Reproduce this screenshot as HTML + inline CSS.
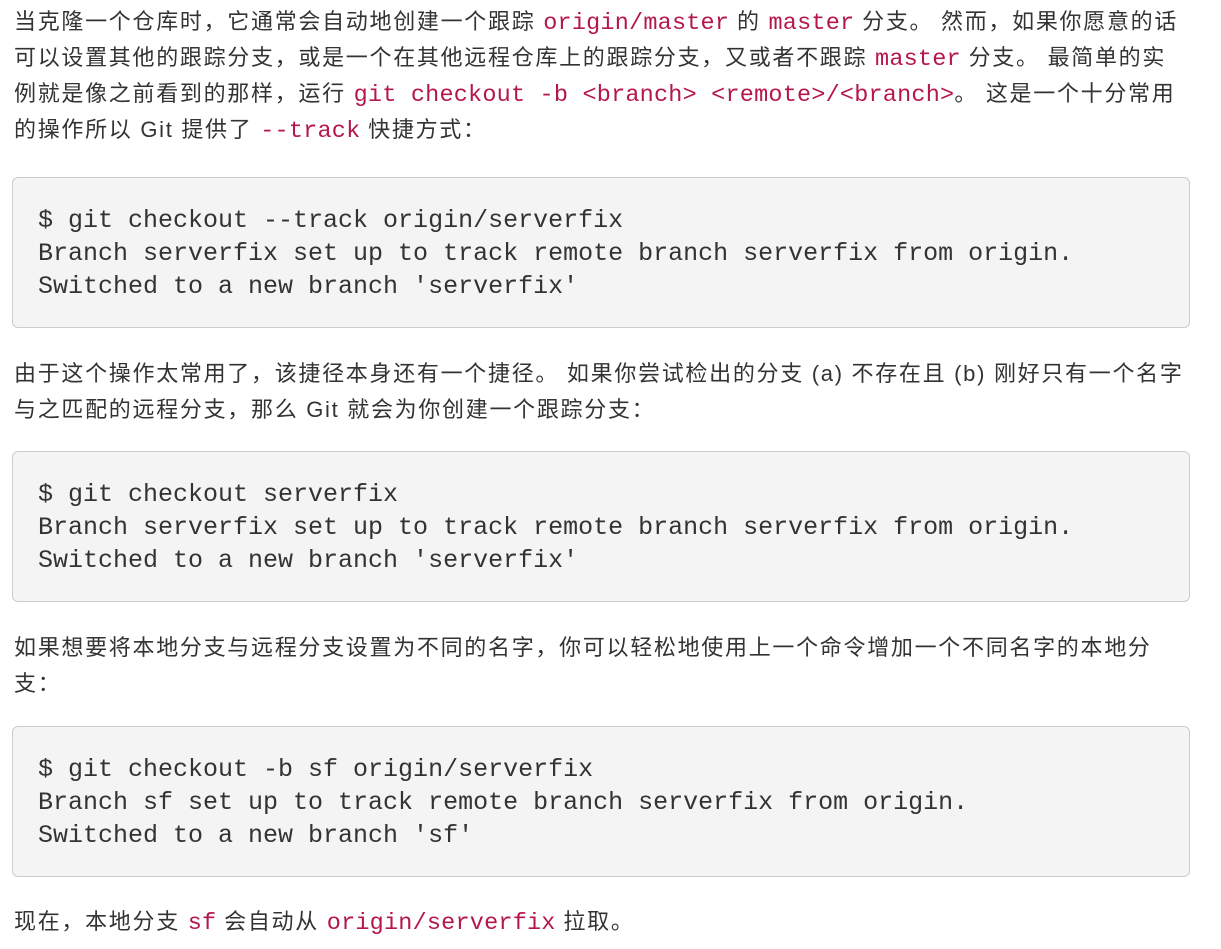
<!DOCTYPE html>
<html><head><meta charset="utf-8"><style>
body{margin:0;width:1221px;height:949px;background:#fff;position:relative;overflow:hidden;font-family:"Liberation Sans","Noto Sans CJK SC",sans-serif;color:#333;}
.l{position:absolute;left:14px;font-size:22px;letter-spacing:1.7px;line-height:36px;height:36px;white-space:nowrap;}
code{font-family:"Liberation Mono",monospace;color:#b5174b;font-size:23.5px;letter-spacing:0.2px;}
.pre{position:absolute;left:12px;width:1178px;height:151px;background:#f4f4f4;border:1px solid #ccc;border-radius:6px;box-sizing:border-box;}
.pre div{position:absolute;left:25px;font-family:"Liberation Mono",monospace;font-size:25px;line-height:33px;color:#333;white-space:pre;}
</style></head><body>
<div class="l" style="top:4px">当克隆一个仓库时，它通常会自动地创建一个跟踪 <code>origin/master</code> 的 <code>master</code> 分支。 然而，如果你愿意的话</div>
<div class="l" style="top:40px">可以设置其他的跟踪分支，或是一个在其他远程仓库上的跟踪分支，又或者不跟踪 <code>master</code> 分支。 最简单的实</div>
<div class="l" style="top:76px">例就是像之前看到的那样，运行 <code>git checkout -b &lt;branch&gt; &lt;remote&gt;/&lt;branch&gt;</code>。 这是一个十分常用</div>
<div class="l" style="top:112px">的操作所以 Git 提供了 <code>--track</code> 快捷方式：</div>
<div class="pre" style="top:177px"><div style="top:26px">$ git checkout --track origin/serverfix
Branch serverfix set up to track remote branch serverfix from origin.
Switched to a new branch 'serverfix'</div></div>
<div class="l" style="top:356px">由于这个操作太常用了，该捷径本身还有一个捷径。 如果你尝试检出的分支 (a) 不存在且 (b) 刚好只有一个名字</div>
<div class="l" style="top:392px">与之匹配的远程分支，那么 Git 就会为你创建一个跟踪分支：</div>
<div class="pre" style="top:451px"><div style="top:26px">$ git checkout serverfix
Branch serverfix set up to track remote branch serverfix from origin.
Switched to a new branch 'serverfix'</div></div>
<div class="l" style="top:630px">如果想要将本地分支与远程分支设置为不同的名字，你可以轻松地使用上一个命令增加一个不同名字的本地分</div>
<div class="l" style="top:666px">支：</div>
<div class="pre" style="top:726px"><div style="top:26px">$ git checkout -b sf origin/serverfix
Branch sf set up to track remote branch serverfix from origin.
Switched to a new branch 'sf'</div></div>
<div class="l" style="top:904px">现在，本地分支 <code>sf</code> 会自动从 <code>origin/serverfix</code> 拉取。</div>
</body></html>
